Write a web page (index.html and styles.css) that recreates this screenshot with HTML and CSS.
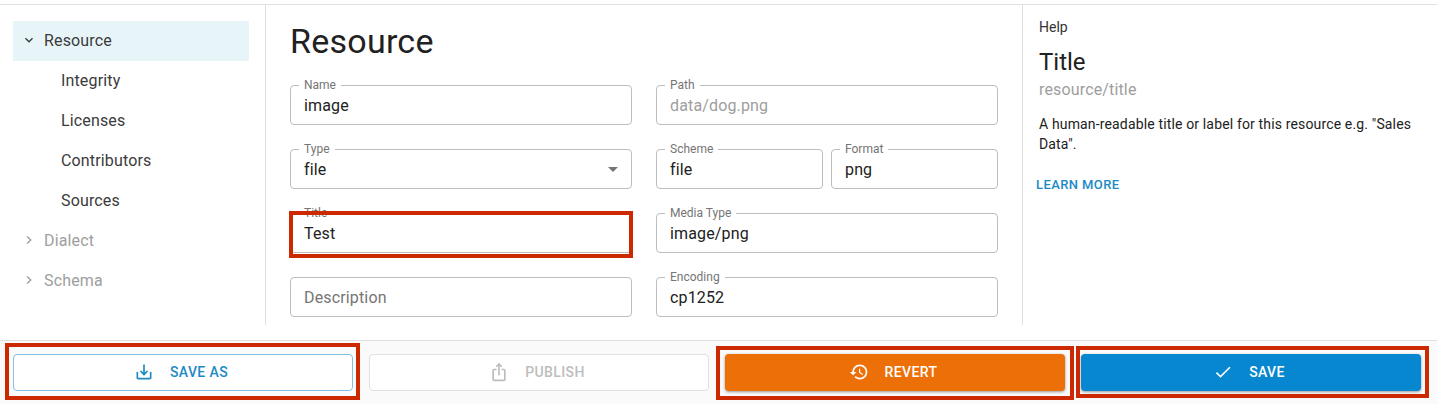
FILE: index.html
```html
<!DOCTYPE html>
<html lang="en">
<head>
    <meta charset="UTF-8">
    <meta name="viewport" content="width=device-width, initial-scale=1.0">
    <title>Resource</title>
    <link rel="stylesheet" href="styles.css">
</head>
<body>
    <div class="panels">
        <nav class="sidebar">
            <div class="tree-item selected">
                <svg class="tree-icon" viewBox="0 0 24 24"><path d="M16.59 8.59 12 13.17 7.41 8.59 6 10l6 6 6-6z"/></svg>
                Resource
            </div>
            <div class="tree-item child">Integrity</div>
            <div class="tree-item child">Licenses</div>
            <div class="tree-item child">Contributors</div>
            <div class="tree-item child">Sources</div>
            <div class="tree-item muted">
                <svg class="tree-icon" viewBox="0 0 24 24"><path d="M10 6 8.59 7.41 13.17 12l-4.58 4.59L10 18l6-6z"/></svg>
                Dialect
            </div>
            <div class="tree-item muted">
                <svg class="tree-icon" viewBox="0 0 24 24"><path d="M10 6 8.59 7.41 13.17 12l-4.58 4.59L10 18l6-6z"/></svg>
                Schema
            </div>
        </nav>

        <main class="editor">
            <h1>Resource</h1>
            <form class="fields">
                <div class="column">
                    <fieldset class="field"><legend>Name</legend><span class="value">image</span></fieldset>
                    <fieldset class="field"><legend>Type</legend><span class="value">file</span><span class="caret"></span></fieldset>
                    <fieldset class="field"><legend>Title</legend><span class="value">Test</span></fieldset>
                    <fieldset class="field no-label"><span class="value placeholder">Description</span></fieldset>
                </div>
                <div class="column">
                    <fieldset class="field"><legend>Path</legend><span class="value disabled">data/dog.png</span></fieldset>
                    <div class="pair">
                        <fieldset class="field"><legend>Scheme</legend><span class="value">file</span></fieldset>
                        <fieldset class="field"><legend>Format</legend><span class="value">png</span></fieldset>
                    </div>
                    <fieldset class="field"><legend>Media Type</legend><span class="value">image/png</span></fieldset>
                    <fieldset class="field"><legend>Encoding</legend><span class="value">cp1252</span></fieldset>
                </div>
            </form>
        </main>

        <aside class="help">
            <div class="help-label">Help</div>
            <h2>Title</h2>
            <div class="help-path">resource/title</div>
            <p>A human-readable title or label for this resource e.g. "Sales Data".</p>
            <a class="learn-more" href="#">LEARN MORE</a>
        </aside>
    </div>

    <footer class="actions">
        <button class="btn outlined" type="button">
            <svg viewBox="0 0 24 24"><path d="M19 12v7H5v-7H3v7c0 1.1.9 2 2 2h14c1.1 0 2-.9 2-2v-7h-2zm-6 .67l2.59-2.58L17 11.5l-5 5-5-5 1.41-1.41L11 12.67V3h2z"/></svg>
            SAVE AS
        </button>
        <button class="btn inactive" type="button">
            <svg viewBox="0 0 24 24"><path d="M16 5l-1.42 1.42-1.59-1.59V16h-1.98V4.83L9.42 6.42 8 5l4-4 4 4zm4 5v11c0 1.1-.9 2-2 2H6c-1.11 0-2-.9-2-2V10c0-1.11.89-2 2-2h3v2H6v11h12V10h-3V8h3c1.1 0 2 .89 2 2z"/></svg>
            PUBLISH
        </button>
        <button class="btn orange" type="button">
            <svg viewBox="0 0 24 24"><path d="M13 3c-4.97 0-9 4.03-9 9H1l3.89 3.89.07.14L9 12H6c0-3.87 3.13-7 7-7s7 3.13 7 7-3.13 7-7 7c-1.93 0-3.68-.79-4.94-2.06l-1.42 1.42C8.27 19.99 10.51 21 13 21c4.97 0 9-4.03 9-9s-4.03-9-9-9zm-1 5v5l4.28 2.54.72-1.21-3.5-2.08V8H12z"/></svg>
            REVERT
        </button>
        <button class="btn blue" type="button">
            <svg viewBox="0 0 24 24"><path d="M9 16.17 4.83 12l-1.42 1.41L9 19 21 7l-1.41-1.41z"/></svg>
            SAVE
        </button>
    </footer>

    <!-- red annotation boxes drawn over the screenshot -->
    <div class="mark mark-title"></div>
    <div class="mark mark-saveas"></div>
    <div class="mark mark-revert"></div>
    <div class="mark mark-save"></div>
</body>
</html>
```

FILE: styles.css
```css
* {
    box-sizing: border-box;
}
html, body {
    height: 404px;
    overflow: hidden;
}
body {
    font-family: Roboto, "Liberation Sans", sans-serif;
    background-color: #fff;
    color: #212121;
    margin: 0;
    padding-top: 4px;
    position: relative;
}
.panels {
    display: flex;
    height: 321px;
    border-top: 1px solid #e0e0e0;
}

/* left tree */
.sidebar {
    width: 266px;
    flex: none;
    padding: 16px 16px 0 13px;
    border-right: 1px solid #e0e0e0;
}
.tree-item {
    display: flex;
    align-items: center;
    height: 40px;
    width: 236px;
    padding-bottom: 2px;
    font-size: 16px;
    letter-spacing: 0.15px;
    color: #3b3b3b;
}
.tree-item.selected {
    background-color: #e7f5f8;
}
.tree-item.child {
    padding-left: 48px;
}
.tree-item.muted {
    color: #9e9e9e;
}
.tree-icon {
    width: 16px;
    height: 16px;
    margin: 0 7px 0 8px;
    fill: #3b3b3b;
}
.muted .tree-icon {
    fill: #9e9e9e;
}

/* main form */
.editor {
    width: 757px;
    flex: none;
    padding: 0 24px;
    border-right: 1px solid #e0e0e0;
}
h1 {
    margin: 16px 0 24px;
    font-size: 34px;
    font-weight: 400;
    letter-spacing: 0.25px;
    line-height: 40px;
    height: 40px;
    color: #212121;
}
.fields {
    display: grid;
    grid-template-columns: 342px 342px;
    gap: 24px;
}
.column {
    display: flex;
    flex-direction: column;
    gap: 24px;
}
.pair {
    display: grid;
    grid-template-columns: 1fr 1fr;
    gap: 8px;
}
.field {
    position: relative;
    height: 40px;
    margin: 0;
    padding: 0 13px;
    border: 1px solid #bdbdbd;
    border-radius: 4px;
    min-width: 0;
}
.field legend {
    height: 0;
    padding: 0 5px;
    margin-left: -5px;
    font-size: 12px;
    line-height: 0;
    color: #757575;
    transform: translateY(-1px);
}
.value {
    display: block;
    font-size: 16px;
    letter-spacing: 0.15px;
    line-height: 40px;
    color: #212121;
}
.value.disabled {
    color: #9e9e9e;
}
.value.placeholder {
    color: #757575;
}
.caret {
    position: absolute;
    right: 13px;
    top: 17px;
    border-left: 5px solid transparent;
    border-right: 5px solid transparent;
    border-top: 5px solid #757575;
}

/* help */
.help {
    flex: 1;
    padding: 14px 16px;
    font-size: 14px;
}
.help-label {
    line-height: 16px;
    color: #333;
}
h2 {
    margin: 11px 0 0;
    font-size: 24px;
    font-weight: 400;
    line-height: 32px;
}
.help-path {
    font-size: 16px;
    letter-spacing: 0.15px;
    line-height: 24px;
    color: #9e9e9e;
}
.help p {
    margin: 12px 0 0;
    letter-spacing: 0.15px;
    line-height: 20px;
    color: #212121;
}
.learn-more {
    display: block;
    margin: 21px 0 0 -3px;
    font-size: 13px;
    font-weight: 500;
    letter-spacing: 0.4px;
    line-height: 20px;
    color: #1c8ac4;
    text-decoration: none;
}

/* bottom buttons */
.actions {
    display: grid;
    grid-template-columns: repeat(4, 340px);
    gap: 16px;
    height: 64px;
    margin-top: 15px;
    padding: 13px 0 0 13px;
    background-color: #fafafa;
    border-top: 1px solid #e0e0e0;
}
.btn {
    display: flex;
    align-items: center;
    justify-content: center;
    gap: 16px;
    height: 37px;
    padding: 0 4px 2px 0;
    border-radius: 4px;
    border: 1px solid transparent;
    font-family: inherit;
    font-size: 14px;
    font-weight: 500;
    letter-spacing: 0.4px;
}
.btn svg {
    width: 20px;
    height: 20px;
    fill: currentColor;
}
.outlined {
    background-color: #fff;
    border-color: #83c1e4;
    color: #1c8ac4;
}
.inactive {
    background-color: #fff;
    border-color: #e0e0e0;
    color: #bdbdbd;
}
.orange, .blue {
    color: #fff;
    box-shadow: 0 1px 3px rgba(0, 0, 0, 0.4);
}
.orange {
    background-color: #ed6f07;
}
.blue {
    background-color: #0787cf;
}

/* annotations */
.mark {
    position: absolute;
    border: 4px solid #cc2900;
}
.mark-title {
    left: 289px;
    top: 211px;
    width: 344px;
    height: 47px;
}
.mark-saveas {
    left: 5px;
    top: 343px;
    width: 355px;
    height: 57px;
}
.mark-revert {
    left: 716px;
    top: 346px;
    width: 358px;
    height: 54px;
}
.mark-save {
    left: 1076px;
    top: 346px;
    width: 353px;
    height: 52px;
}
```
